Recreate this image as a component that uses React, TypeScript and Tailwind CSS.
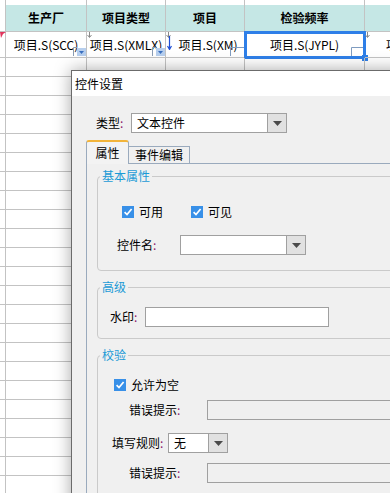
import React from 'react';

/**
 * Spreadsheet with the "控件设置" dialog open over it
 */

const colWidths = ['w-[6px]', 'w-[81px]', 'w-[79px]', 'w-[79px]', 'w-[120px]', 'flex-1'];
const grid = 'border-[#c3c3c3]';

function Colon() {
  return <span className="text-[#8b1a6b]">:</span>;
}

function ArrowDown() {
  return (
    <svg width="9" height="5" viewBox="0 0 9 5">
      <path d="M0 0H9L4.5 5Z" fill="#4a4a4a" />
    </svg>
  );
}

function Select({ value, className }: { value?: string; className: string }) {
  return (
    <div className={`flex h-[20px] border border-[#a0a0a0] bg-white ${className}`}>
      <div className="flex flex-1 items-center overflow-hidden whitespace-nowrap pl-[5px]">{value}</div>
      <div className="flex w-[19px] items-center justify-center border-l border-[#a0a0a0] bg-[#e1e1e1]">
        <ArrowDown />
      </div>
    </div>
  );
}

function Check() {
  return (
    <span className="flex h-[12px] w-[12px] items-center justify-center bg-[#3890e8]">
      <svg width="10" height="10" viewBox="0 0 10 10">
        <path d="M1.6 5.2L4 7.6L8.6 2" stroke="#fff" strokeWidth="1.7" fill="none" />
      </svg>
    </span>
  );
}

function Group({ title, className, children }: { title: string; className: string; children: React.ReactNode }) {
  return (
    <fieldset className={`mr-[12px] rounded-[4px] border border-[#cacaca] ${className}`}>
      <legend className="ml-[2px] px-[2px] leading-[16px] text-[#1b9ad6]">{title}</legend>
      {children}
    </fieldset>
  );
}

function Mark() {
  return (
    <svg className="absolute left-[0px] top-[0px]" width="5" height="6" viewBox="0 0 5 6">
      <path d="M2.5 0V5M0.5 3L2.5 5.5L4.5 3" stroke="#8a8a8a" strokeWidth="1" fill="none" />
    </svg>
  );
}

function CellDrop({ left }: { left: string }) {
  return (
    <svg className={`absolute top-[14px] ${left}`} width="13" height="10" viewBox="0 0 13 10">
      <path d="M0.5 10V1.5H4" stroke="#8a9cb4" strokeWidth="1" fill="none" />
      <rect x="4" y="2" width="9" height="8" fill="#b7cfee" />
      <path d="M6 5H11L8.5 8Z" fill="#3a6fc0" />
    </svg>
  );
}

function Corner({ left, width }: { left: string; width: number }) {
  return (
    <svg className={`absolute top-[15px] ${left}`} width={width} height="9" viewBox={`0 0 ${width} 9`}>
      <path d={`M0.5 9V0.5H${width}`} stroke="#7f9cc0" strokeWidth="1" fill="none" />
    </svg>
  );
}

function Row({ h, cells, header }: { h: string; cells?: React.ReactNode[]; header?: boolean }) {
  return (
    <div className={`flex ${h}`}>
      {colWidths.map((w, i) => (
        <div
          key={i}
          className={`relative flex shrink-0 items-center justify-center overflow-visible whitespace-nowrap border-b ${grid} ${w} ${
            i < 5 ? 'border-r' : ''
          } ${header && i > 0 ? 'bg-[#c5e7e5] font-bold' : ''}`}
        >
          {cells ? cells[i] : null}
        </div>
      ))}
    </div>
  );
}

function Sheet() {
  const header = [null, '生产厂', '项目类型', '项目', '检验频率', ''];
  const data = [
    <svg key="r" className="absolute left-[0px] top-[0px]" width="6" height="6" viewBox="0 0 6 6">
      <path d="M0 0H6L3 2L1 6Z" fill="#e2355d" />
    </svg>,
    <>
      <span className="overflow-hidden">项目.S(SCC)</span>
      <CellDrop left="left-[67px]" />
    </>,
    <>
      <Mark />
      <span className="w-[78px] overflow-hidden text-center">项目.S(XMLX)</span>
      <CellDrop left="left-[65px]" />
    </>,
    <>
      <Mark />
      <svg className="absolute left-[1px] top-[4px]" width="5" height="14" viewBox="0 0 5 14">
        <path d="M2.5 0V13M0.5 10L2.5 13.5L4.5 10" stroke="#1f4fd6" strokeWidth="1.2" fill="none" />
      </svg>
      <span className="pl-[6px]">项目.S(XM)</span>
      <Corner left="left-[64px]" width={14} />
    </>,
    <>
      <span>项目.S(JYPL)</span>
      <Corner left="left-[106px]" width={12} />
      <div className="absolute left-[-1px] top-[-1px] h-[28px] w-[122px] border-[3px] border-[#2e7fe8]">
        <div className="absolute bottom-[-5px] right-[-5px] h-[6px] w-[6px] bg-[#2e7fe8]" />
      </div>
    </>,
    <>
      <Mark />
      <span className="absolute left-[21px]">项目</span>
    </>,
  ];
  return (
    <div className="flex flex-col">
      <div className="flex h-[5px]">
        {colWidths.map((w, i) => (
          <div key={i} className={`shrink-0 ${grid} ${w} ${i < 5 ? 'border-r' : ''}`} />
        ))}
      </div>
      <Row h="h-[27px]" cells={header} header />
      <Row h="h-[26px]" cells={data} />
      {Array.from({ length: 24 }).map((_, i) => (
        <Row key={i} h="h-[19px]" />
      ))}
    </div>
  );
}

function Dialog() {
  return (
    <div className="absolute left-[71px] top-[70px] flex h-[460px] w-[400px] flex-col border border-[#6b6b6b] bg-[#f0f0f0] shadow-[0_0_16px_rgba(0,0,0,0.35)]">
      <div className="flex h-[25px] shrink-0 items-center bg-white pl-[3px]">控件设置</div>
      <div className="flex flex-1 flex-col pt-[17px]">
        <div className="ml-[24px] flex h-[20px] items-center">
          <span className="w-[35px]">
            类型
            <Colon />
          </span>
          <Select value="文本控件" className="w-[156px]" />
        </div>

        <div className="ml-[14px] mt-[7px] flex flex-1 flex-col">
          <div className="flex h-[24px] items-end">
            <div className="flex h-[24px] w-[43px] items-center justify-center rounded-t-[3px] border-x border-t-2 border-x-[#9aaabd] border-t-[#f2b43a] bg-[#f3f3f3]">
              属性
            </div>
            <div className="flex h-[18px] w-[61px] items-center justify-center border-y border-r border-[#9aaabd]">
              事件编辑
            </div>
            <div className="flex-1 border-b border-[#9aaabd]" />
          </div>

          <div className="flex-1 border-l border-[#9aaabd] pl-[10px] pt-[4px]">
            <Group title="基本属性" className="pb-[15px]">
              <div className="mt-[18px] flex h-[20px] items-center pl-[24px]">
                <Check />
                <span className="ml-[5px] w-[52px]">可用</span>
                <Check />
                <span className="ml-[5px]">可见</span>
              </div>
              <div className="mt-[13px] flex items-center pl-[19px]">
                <span className="w-[63px]">
                  控件名
                  <Colon />
                </span>
                <Select className="w-[126px]" />
              </div>
            </Group>

            <Group title="高级" className="mt-[8px] pb-[11px]">
              <div className="mt-[12px] flex items-center pl-[12px]">
                <span className="w-[35px]">
                  水印
                  <Colon />
                </span>
                <div className="h-[20px] w-[184px] border border-[#a0a0a0] bg-white" />
              </div>
            </Group>

            <Group title="校验" className="mt-[8px] pb-[20px]">
              <div className="mt-[14px] flex h-[16px] items-center pl-[16px]">
                <Check />
                <span className="ml-[5px]">允许为空</span>
              </div>
              <div className="mt-[7px] flex items-center pl-[31px]">
                <span className="w-[78px]">
                  错误提示
                  <Colon />
                </span>
                <div className="h-[20px] w-[240px] border border-[#a0a0a0]" />
              </div>
              <div className="mt-[13px] flex items-center pl-[14px]">
                <span className="w-[56px]">
                  填写规则
                  <Colon />
                </span>
                <Select value="无" className="w-[60px]" />
              </div>
              <div className="mt-[10px] flex items-center pl-[31px]">
                <span className="w-[78px]">
                  错误提示
                  <Colon />
                </span>
                <div className="h-[20px] w-[240px] border border-[#a0a0a0]" />
              </div>
            </Group>
          </div>
        </div>
      </div>
    </div>
  );
}

export default function App() {
  return (
    <div className="relative h-[493px] w-[390px] overflow-hidden bg-white font-['Noto_Sans_CJK_SC',sans-serif] text-[12px] leading-[16px] text-black">
      <Sheet />
      <Dialog />
    </div>
  );
}
